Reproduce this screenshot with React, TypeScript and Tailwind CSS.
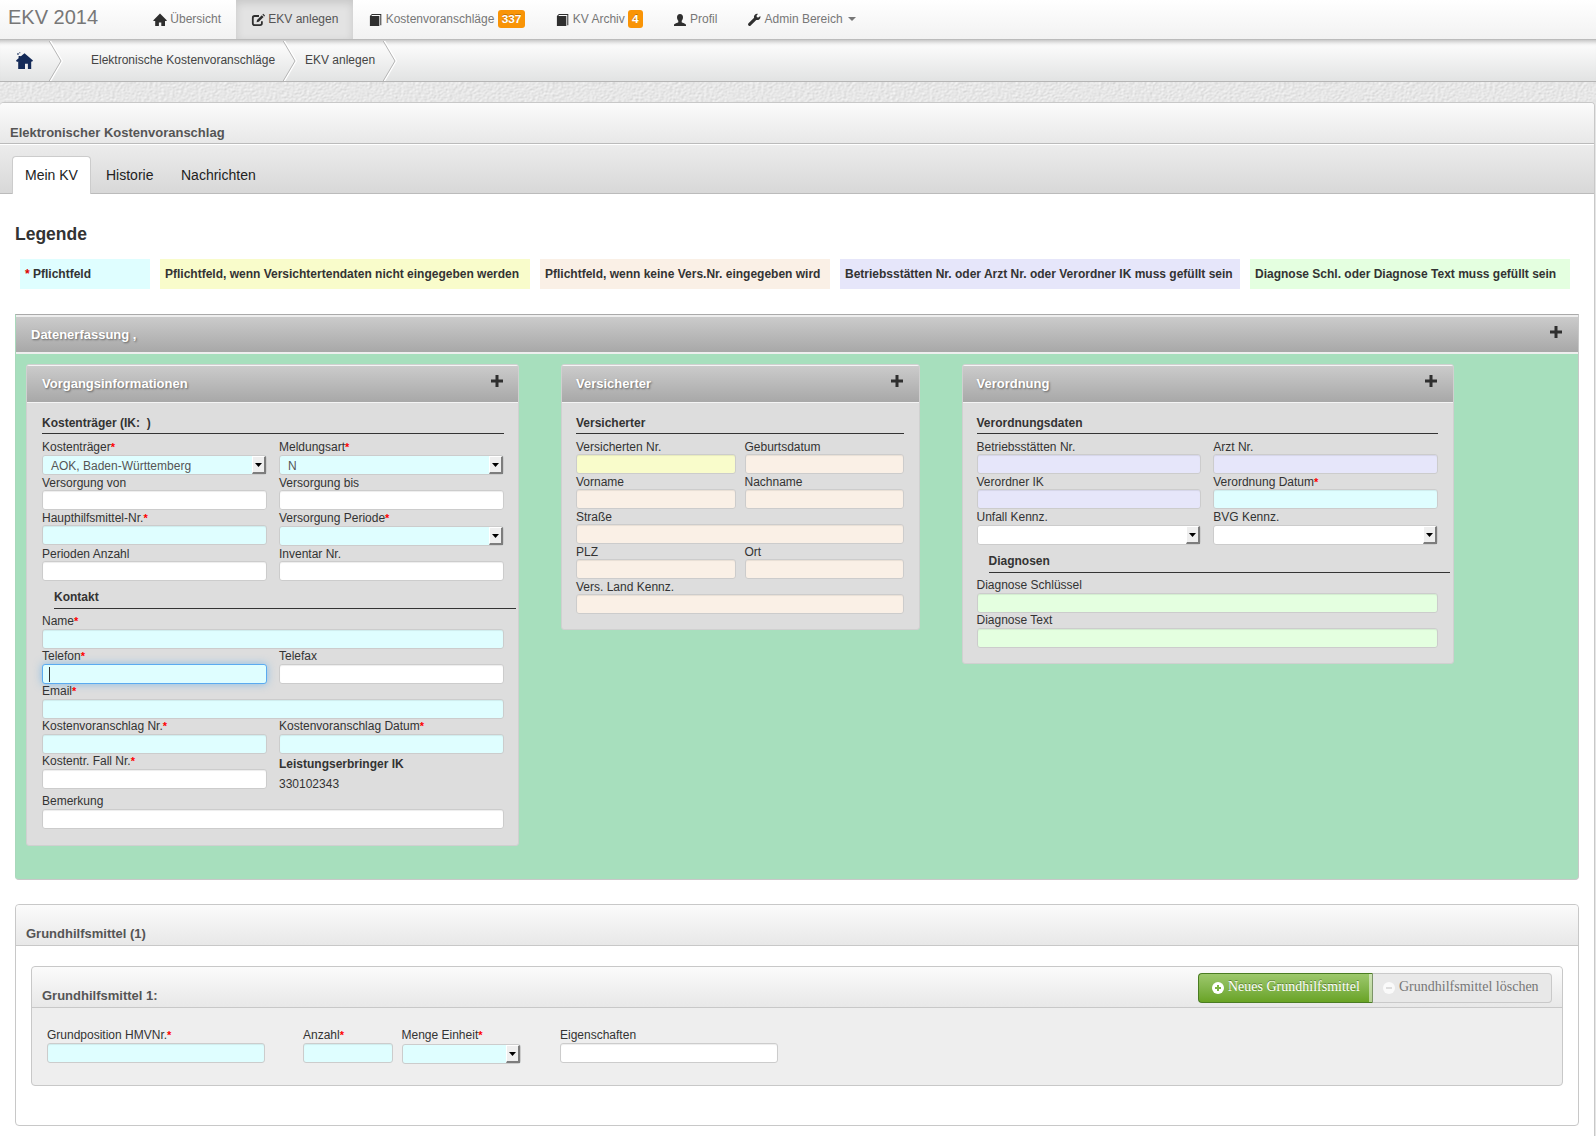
import React from 'react';

const tones = {
  white: 'bg-white',
  cyan: 'bg-[#dffeff]',
  yellow: 'bg-[#f9fccb]',
  rose: 'bg-[#faf0e6]',
  violet: 'bg-[#e6e6fa]',
  green: 'bg-[#e4ffe0]',
};

type Tone = keyof typeof tones;

interface FieldProps {
  label: string;
  tone?: Tone;
  required?: boolean;
  select?: boolean;
  value?: string;
  focused?: boolean;
  low?: boolean;
  className?: string;
}

function Label({ text, required }: { text: string; required?: boolean }) {
  return (
    <label className="block h-[14px] leading-[14px] whitespace-nowrap">
      {text}
      {required && <span className="text-[11px] font-bold text-[#f00]">*</span>}
    </label>
  );
}

function Field({ label, tone = 'white', required, select, value, focused, low, className = '' }: FieldProps) {
  if (select) {
    return (
      <div className={`pb-px ${className}`}>
        <Label text={label} required={required} />
        <div className={`flex h-5 items-stretch justify-between rounded-[3px] border border-[#ccc] pl-2 ${low ? 'mt-[2px]' : 'mt-px'} ${tones[tone]}`}>
          <span className="leading-[20px] text-[#555]">{value}</span>
          <span className="flex w-[14px] items-center justify-center border-t border-r-2 border-b-2 border-l border-t-white border-r-[#7d7d7d] border-b-[#7d7d7d] border-l-white bg-[#efefef]">
            <svg width="7" height="4" viewBox="0 0 7 4">
              <path d="M0 0h7L3.5 4z" fill="#000" />
            </svg>
          </span>
        </div>
      </div>
    );
  }

  return (
    <div className={`${low ? '' : 'pb-px'} ${className}`}>
      <Label text={label} required={required} />
      <div
        className={`flex h-5 items-center rounded-[3px] border pl-1.5 ${low ? 'mt-px' : ''} ${tones[tone]} ${
          focused
            ? 'border-[#5aaaf0] shadow-[0_0_8px_rgba(82,168,236,0.6)]'
            : 'border-[#ccc] shadow-[inset_0_1px_1px_rgba(0,0,0,0.075)]'
        }`}
      >
        {focused && <span className="h-[15px] w-px bg-[#333]" />}
      </div>
    </div>
  );
}

/* Icons */

function HomeIcon() {
  return (
    <svg width="14" height="14" viewBox="0 0 14 14" fill="#2f2f2f">
      <path d="M7 .5 13.700 7.200v.7H12V13H8.300V9.600H5.900V13H2.200V7.900H.4v-.7z" />
    </svg>
  );
}

function EditIcon() {
  return (
    <svg width="14" height="14" viewBox="0 0 14 14" fill="none" stroke="#2f2f2f">
      <path d="M8 3H3.600A1.900 1.900 0 0 0 1.800 4.900v5.300a1.900 1.900 0 0 0 1.900 1.900H9a1.900 1.900 0 0 0 1.900-1.900V8.300" strokeWidth="1.800" />
      <path d="M5.600 9.200 6 7l4.800-4.800 1.800 1.800-4.800 4.800z" fill="#2f2f2f" stroke="none" />
      <path d="m11.400 1.600.8-.8L14 2.600l-.8.8z" fill="#2f2f2f" stroke="none" />
    </svg>
  );
}

function BookIcon() {
  return (
    <svg width="14" height="14" viewBox="0 0 14 14" fill="#2f2f2f">
      <path d="M3.900 1h9.400v11.300h-1V2H4.100l-.9.900h8.100V13H1.900V2.900z" />
    </svg>
  );
}

function UserIcon() {
  return (
    <svg width="14" height="14" viewBox="0 0 14 14" fill="#2f2f2f">
      <path d="M7 1c2 0 3 1.400 3 3.200C10 5.900 9.200 7 8.700 7.700v1.500c.6.800 4.300 1.200 4.300 2.700V13H1v-1.100c0-1.500 3.700-1.900 4.300-2.700V7.700C4.800 7 4 5.900 4 4.200 4 2.400 5 1 7 1z" />
    </svg>
  );
}

function WrenchIcon() {
  return (
    <svg width="14" height="14" viewBox="0 0 14 14" fill="#2f2f2f">
      <path d="M10.900.9 9.500 2.700l.4 1.500 1.500.3 1.900-1.600c.4 1.500-.1 2.800-1.100 3.500-.9.700-2 .8-2.900.5l-5.600 5.600a1.500 1.500 0 0 1-2.200-2.200l5.600-5.500C6.700 3.700 7 2.500 7.900 1.700 8.700.9 9.800.6 10.900.9z" />
    </svg>
  );
}

function PlusIcon() {
  return (
    <svg width="12" height="12" viewBox="0 0 12 12" className="shrink-0">
      <path d="M4.500 0h3v4.500H12v3H7.500V12h-3V7.500H0v-3h4.500z" fill="#2f2f2f" />
    </svg>
  );
}

function Chevron() {
  return (
    <svg width="14" height="40" viewBox="0 0 14 40" fill="none" className="shrink-0">
      <path d="M.2 0 12 20 .2 40" stroke="#fff" strokeWidth="1.500" transform="translate(1.200 0)" />
      <path d="M.2 0 12 20 .2 40" stroke="#b5b5b5" />
    </svg>
  );
}

/* Rough paper background between breadcrumb and content */
function Texture() {
  return (
    <svg width="1596" height="20" className="block">
      <filter id="paper" x="0" y="0" width="100%" height="100%" colorInterpolationFilters="sRGB">
        <feTurbulence type="fractalNoise" baseFrequency="0.35 0.5" numOctaves="3" seed="4" />
        <feDiffuseLighting lightingColor="#fff" surfaceScale="0.28" diffuseConstant="1.045">
          <feDistantLight azimuth="225" elevation="60" />
        </feDiffuseLighting>
      </filter>
      <rect width="1596" height="20" fill="#e6e6e6" filter="url(#paper)" />
    </svg>
  );
}

function NavItem({ icon, label, badge, active, caret }: {
  icon: React.ReactNode;
  label: string;
  badge?: string;
  active?: boolean;
  caret?: boolean;
}) {
  return (
    <a
      className={`flex h-[39px] items-start px-[15px] pt-[9px] leading-5 whitespace-nowrap ${
        active ? 'bg-[#e3e3e3] text-[#555] shadow-[inset_0_3px_8px_rgba(0,0,0,0.125)]' : 'text-[#777]'
      }`}
    >
      <span className="mr-[3.3px] pt-1">{icon}</span>
      {label}
      {badge && (
        <span className="mt-px ml-[3.3px] h-[18px] rounded-[3px] bg-[#f99406] px-1 text-[11.844px] leading-[18px] font-bold text-white [text-shadow:0_-1px_0_rgba(0,0,0,0.25)]">
          {badge}
        </span>
      )}
      {caret && <span className="mt-[8px] ml-[5px] border-x-4 border-t-4 border-x-transparent border-t-[#777]" />}
    </a>
  );
}

function SectionTitle({ children, shifted }: { children: React.ReactNode; shifted?: boolean }) {
  return (
    <h5
      className={`border-b border-[#333] font-bold whitespace-pre ${
        shifted ? 'relative left-3 mt-[8px] mb-[5px] h-[19px] leading-[14px]' : 'mb-[6px] h-[18px] leading-[14px]'
      }`}
    >
      {children}
    </h5>
  );
}

function Panel({ title, children, className, inset = 'pl-[14px] pr-[15px]' }: {
  title: string;
  children: React.ReactNode;
  className: string;
  inset?: string;
}) {
  return (
    <section className={`overflow-hidden rounded-[3px] border border-[#d0d0d0] bg-[#ddd] ${className}`}>
      <header className={`flex h-[38px] items-start justify-between border-y border-[#f4f4f4] bg-gradient-to-b from-[#cbcbcb] to-[#a8a8a8] pt-[10px] ${inset}`}>
        <h3 className="text-[13px] leading-4 font-bold text-white [text-shadow:1px_1px_2px_rgba(0,0,0,0.45)]">{title}</h3>
        <span className="-mt-px mr-px">
          <PlusIcon />
        </span>
      </header>
      <div className={`pt-[13px] ${inset}`}>{children}</div>
    </section>
  );
}

const legend: { text: string; tone: Tone; width: string; required?: boolean }[] = [
  { text: 'Pflichtfeld', tone: 'cyan', width: 'w-[130px]', required: true },
  { text: 'Pflichtfeld, wenn Versichtertendaten nicht eingegeben werden', tone: 'yellow', width: 'w-[370px]' },
  { text: 'Pflichtfeld, wenn keine Vers.Nr. eingegeben wird', tone: 'rose', width: 'w-[290px]' },
  { text: 'Betriebsstätten Nr. oder Arzt Nr. oder Verordner IK muss gefüllt sein', tone: 'violet', width: 'w-[400px]' },
  { text: 'Diagnose Schl. oder Diagnose Text muss gefüllt sein', tone: 'green', width: 'w-[320px]' },
];

function Navbar() {
  return (
    <nav className="flex h-10 border-b border-[#bbb] bg-gradient-to-b from-white to-[#f2f2f2]">
      <span className="w-[138px] pt-[7px] pl-2 text-[20px] leading-5 text-[#777]">EKV 2014</span>
      <NavItem icon={<HomeIcon />} label="Übersicht" />
      <NavItem icon={<EditIcon />} label="EKV anlegen" active />
      <NavItem icon={<BookIcon />} label="Kostenvoranschläge" badge="337" />
      <NavItem icon={<BookIcon />} label="KV Archiv" badge="4" />
      <NavItem icon={<UserIcon />} label="Profil" />
      <NavItem icon={<WrenchIcon />} label="Admin Bereich" caret />
    </nav>
  );
}

function Breadcrumb() {
  return (
    <div className="flex h-[42px] border-b border-[#b5b5b5] bg-gradient-to-b from-white to-[#e2e3e3] pt-px leading-[14px] text-[#444] shadow-[inset_0_6px_4px_-4px_rgba(0,0,0,0.25)]">
      <span className="w-[49px] pt-[11px] pl-4">
        <svg width="17" height="18" viewBox="0 0 17 18" fill="#142a58">
          <path d="M8.500 1.200 17 8.600l-1 1.200-.8-.3V17h-3.300v-5.200H9V17H2.200V9.500l-1.200.4L0 8.600l2.600-2.400V4h2v.6z" />
          <path d="M1.300 1.300h1.400v1.400H1.300zM3.300.3h1v1h-1z" />
        </svg>
      </span>
      <Chevron />
      <span className="w-[219.500px] pt-[12px] pl-[28px] whitespace-nowrap">Elektronische Kostenvoranschläge</span>
      <Chevron />
      <span className="w-[86px] pt-[12px] pl-[8.500px] whitespace-nowrap">EKV anlegen</span>
      <Chevron />
    </div>
  );
}

function Tabs() {
  return (
    <div className="flex h-[50px] items-end border-t border-b border-t-white border-b-[#bbb] bg-gradient-to-b from-[#ececec] to-[#d8d8d8] pl-3 text-[14px] leading-5 text-[#222]">
      <span className="-mb-px h-[38px] w-[79px] rounded-t-[4px] border border-b-0 border-[#ccc] bg-white pt-[8px] pl-[12px]">Mein KV</span>
      <span className="h-[37px] w-[75px] pt-[9px] pl-[15px]">Historie</span>
      <span className="h-[37px] pt-[9px] pl-[15px]">Nachrichten</span>
    </div>
  );
}

function Vorgang() {
  return (
    <Panel title="Vorgangsinformationen" className="h-[482px] w-[493px]" inset="pl-[15px] pr-[14px]">
      <SectionTitle>{'Kostenträger (IK:  )'}</SectionTitle>
      <div className="grid grid-cols-2 gap-x-3">
        <Field label="Kostenträger" required select tone="cyan" value="AOK, Baden-Württemberg" />
        <Field label="Meldungsart" required select tone="cyan" value="N" />
        <Field label="Versorgung von" />
        <Field label="Versorgung bis" />
        <Field label="Haupthilfsmittel-Nr." required tone="cyan" />
        <Field label="Versorgung Periode" required select tone="cyan" />
        <Field label="Perioden Anzahl" />
        <Field label="Inventar Nr." />
      </div>
      <SectionTitle shifted>Kontakt</SectionTitle>
      <div className="grid grid-cols-2 gap-x-3">
        <Field label="Name" required low tone="cyan" className="col-span-2" />
        <Field label="Telefon" required low tone="cyan" focused />
        <Field label="Telefax" low />
        <Field label="Email" required low tone="cyan" className="col-span-2" />
        <Field label="Kostenvoranschlag Nr." required low tone="cyan" />
        <Field label="Kostenvoranschlag Datum" required low tone="cyan" />
        <Field label="Kostentr. Fall Nr." required low />
        <div className="pt-[3px]">
          <p className="leading-[14px] font-bold">Leistungserbringer IK</p>
          <p className="pt-[6px] leading-[14px]">330102343</p>
        </div>
        <Field label="Bemerkung" low className="col-span-2 pt-[3px]" />
      </div>
    </Panel>
  );
}

function Versicherter() {
  return (
    <Panel title="Versicherter" className="ml-[42px] h-[266px] w-[359px]">
      <SectionTitle>Versicherter</SectionTitle>
      <div className="grid grid-cols-2 gap-x-[9px]">
        <Field label="Versicherten Nr." tone="yellow" />
        <Field label="Geburtsdatum" tone="rose" />
        <Field label="Vorname" tone="rose" />
        <Field label="Nachname" tone="rose" />
        <Field label="Straße" tone="rose" className="col-span-2" />
        <Field label="PLZ" tone="rose" />
        <Field label="Ort" tone="rose" />
        <Field label="Vers. Land Kennz." tone="rose" className="col-span-2" />
      </div>
    </Panel>
  );
}

function Verordnung() {
  return (
    <Panel title="Verordnung" className="ml-[41.500px] h-[300px] w-[492.500px]">
      <SectionTitle>Verordnungsdaten</SectionTitle>
      <div className="grid grid-cols-2 gap-x-3">
        <Field label="Betriebsstätten Nr." tone="violet" />
        <Field label="Arzt Nr." tone="violet" />
        <Field label="Verordner IK" tone="violet" />
        <Field label="Verordnung Datum" required tone="cyan" />
        <Field label="Unfall Kennz." select />
        <Field label="BVG Kennz." select />
      </div>
      <SectionTitle shifted>Diagnosen</SectionTitle>
      <Field label="Diagnose Schlüssel" low tone="green" />
      <Field label="Diagnose Text" low tone="green" />
    </Panel>
  );
}

function Grundhilfsmittel() {
  return (
    <section className="mt-6 h-[222px] rounded-[4px] border border-[#c8c8c8] bg-white">
      <header className="h-[41px] rounded-t-[4px] border-b border-[#c8c8c8] bg-gradient-to-b from-[#fbfbfb] to-[#e8e8e8] pt-[21px] pl-[10px] text-[13px] leading-4 font-bold text-[#555]">
        Grundhilfsmittel (1)
      </header>
      <div className="mx-[15px] mt-5 h-[120px] rounded-[4px] border border-[#c8c8c8] bg-[#eee]">
        <header className="flex h-[41px] justify-between rounded-t-[4px] border-b border-[#c8c8c8] bg-gradient-to-b from-[#fbfbfb] to-[#e8e8e8] pr-[10px] pl-[10px]">
          <h4 className="pt-[21px] text-[13px] leading-4 font-bold text-[#555]">Grundhilfsmittel 1:</h4>
          <div className="mt-[6px] flex h-[30px] font-['Liberation_Serif',serif] text-[14px] leading-[26px] whitespace-nowrap">
            <button className="flex w-[175px] items-start rounded-l-[4px] border border-[#4a7c22] border-r-[#7c9468] bg-gradient-to-b from-[#9dc86c] to-[#69a323] pl-[13px] text-white shadow-[inset_-3px_0_0_rgba(255,255,255,0.5)] [text-shadow:0_-1px_0_rgba(0,0,0,0.35)]">
              <svg width="12" height="12" viewBox="0 0 12 12" className="mt-[8px] mr-1">
                <circle cx="6" cy="6" r="6" fill="#fff" />
                <path d="M6 3v6M3 6h6" stroke="#7cb342" strokeWidth="2" />
              </svg>
              Neues Grundhilfsmittel
            </button>
            <button className="flex w-[179px] items-start rounded-r-[4px] border border-l-0 border-[#c9c9c9] bg-[#e8e8e8] pl-[10px] text-[#777]">
              <svg width="12" height="12" viewBox="0 0 12 12" className="mt-[8px] mr-1">
                <circle cx="6" cy="6" r="6" fill="#fafafa" />
                <path d="M3 6h6" stroke="#ddd" strokeWidth="2" />
              </svg>
              Grundhilfsmittel löschen
            </button>
          </div>
        </header>
        <div className="flex pt-[20px] pl-[15px]">
          <Field label="Grundposition HMVNr." required low tone="cyan" className="w-[218px]" />
          <Field label="Anzahl" required low tone="cyan" className="ml-[38px] w-[90px]" />
          <Field label="Menge Einheit" required select low tone="cyan" className="ml-[8.500px] w-[119px]" />
          <Field label="Eigenschaften" low className="ml-[39.500px] w-[218px]" />
        </div>
      </div>
    </section>
  );
}

export default function App() {
  return (
    <div className="h-[1136px] w-[1596px] overflow-hidden bg-[#e6e6e6] font-['Liberation_Sans',Arial,sans-serif] text-[12px] text-[#333]">
      <Navbar />
      <Breadcrumb />
      <Texture />

      <main className="h-[1040px] w-[1595px] rounded-t-[4px] border border-l-0 border-[#c8c8c8] bg-white">
        <header className="h-[41px] rounded-t-[4px] border-b border-[#bbb] bg-gradient-to-b from-[#fbfbfb] to-[#e8e8e8] pt-[22px] pl-[10px] text-[13px] leading-4 font-bold text-[#555]">
          Elektronischer Kostenvoranschlag
        </header>
        <Tabs />

        <div className="pt-[30px] pr-[15px] pl-[15px]">
          <h2 className="text-[17.500px] leading-5 font-bold">Legende</h2>
          <ul className="mt-[15px] flex gap-[10px] pl-[5px]">
            {legend.map((item) => (
              <li key={item.text} className={`h-[30px] shrink-0 pl-[5px] leading-[30px] font-bold whitespace-nowrap ${tones[item.tone]} ${item.width}`}>
                {item.required && <span className="text-[#d00]">* </span>}
                {item.text}
              </li>
            ))}
          </ul>

          <section className="mt-[25px] h-[566px] overflow-hidden rounded-b-[4px] border border-[#c8c8c8] border-t-[#aaa] border-l-[#a9d8bb] bg-[#a7dfbd]">
            <header className="flex h-[39px] items-start justify-between border-t-2 border-b-2 border-[#eee] bg-gradient-to-b from-[#cbcbcb] to-[#a8a8a8] pt-[10px] pr-4 pl-[15px]">
              <h3 className="text-[13px] leading-4 font-bold text-white [text-shadow:1px_1px_2px_rgba(0,0,0,0.45)]">Datenerfassung ,</h3>
              <span className="-mt-px">
                <PlusIcon />
              </span>
            </header>
            <div className="flex items-start pt-[10px] pl-[10px]">
              <Vorgang />
              <Versicherter />
              <Verordnung />
            </div>
          </section>

          <Grundhilfsmittel />
        </div>
      </main>
    </div>
  );
}
